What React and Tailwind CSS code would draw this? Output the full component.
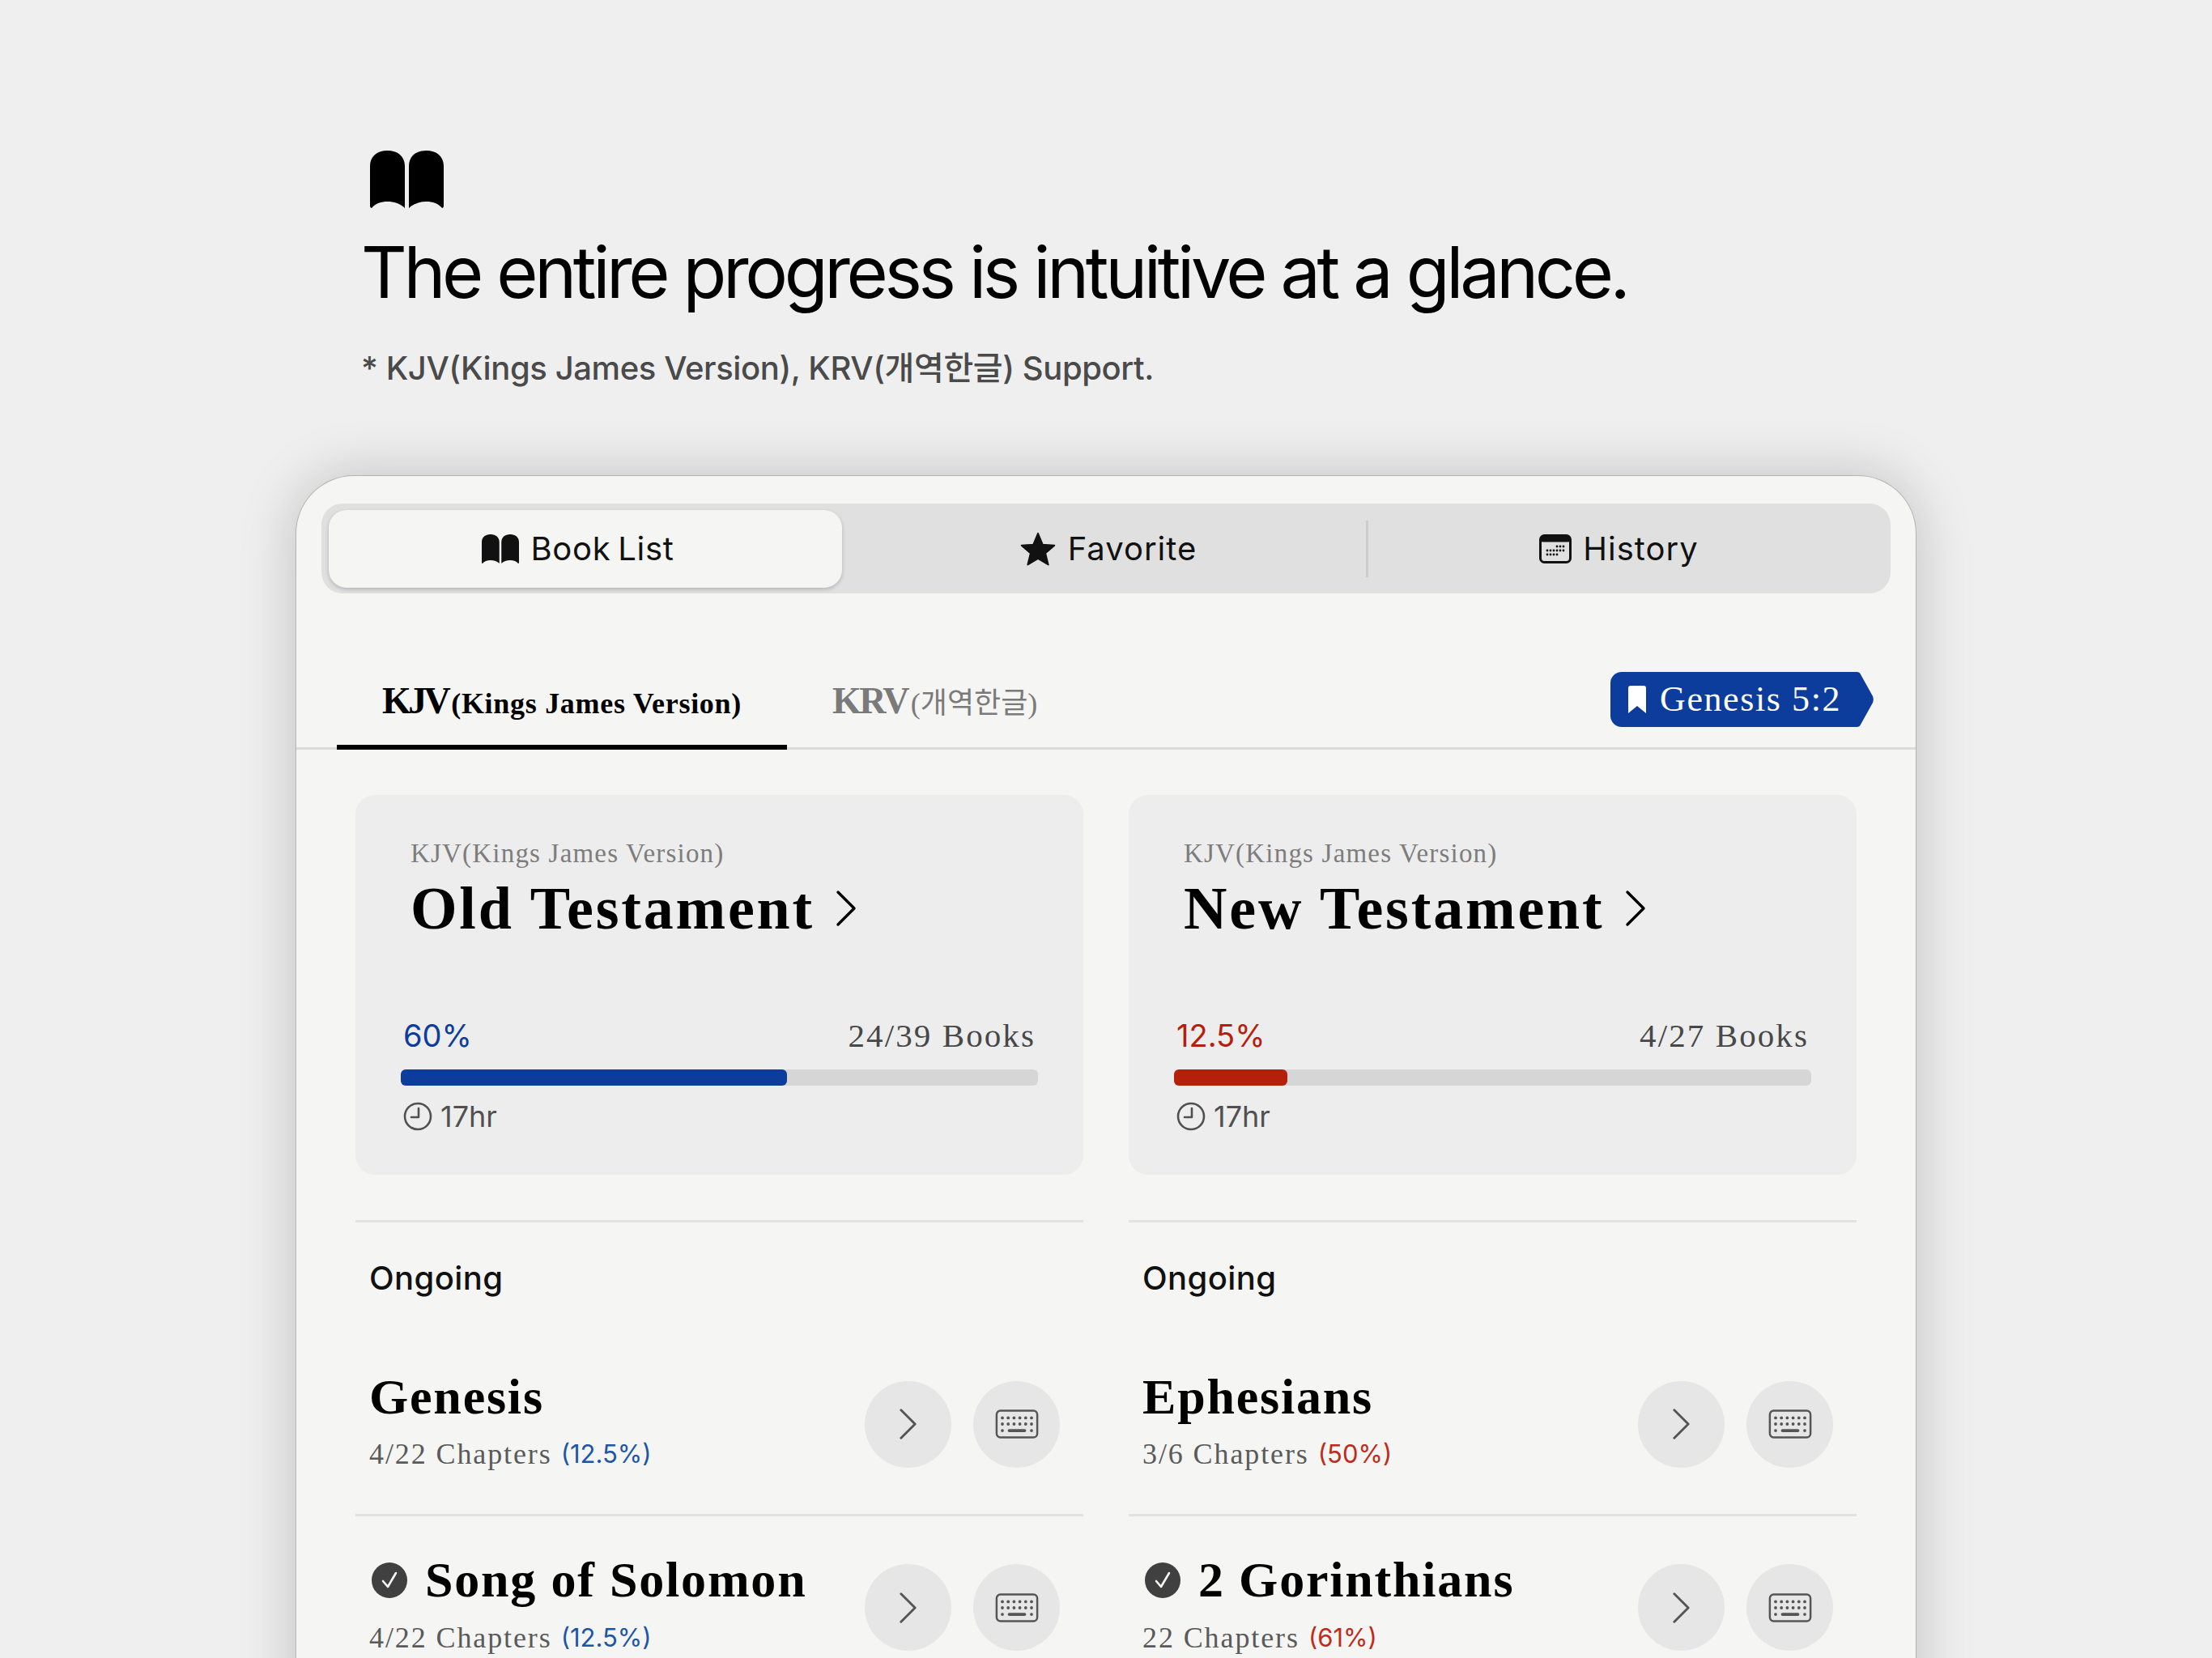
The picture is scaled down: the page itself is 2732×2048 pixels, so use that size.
import React from "react";

const sans = "[font-family:Inter,'Noto_Sans_CJK_KR',sans-serif]";
const serif = "[font-family:'Liberation_Serif','Noto_Sans_CJK_KR',serif]";

function BookIcon({ className }) {
  return (
    <svg viewBox="0 0 91 71" className={className} fill="currentColor">
      <path d="M0 68V19C0 7 9 0 21.5 0S43 7 43 19V71C38 66 30 63 21.5 63S6 66 2 71C1 71 0 70 0 68Z" />
      <path d="M91 68V19C91 7 82 0 69.5 0S48 7 48 19V71C53 66 61 63 69.5 63S85 66 89 71C90 71 91 70 91 68Z" />
    </svg>
  );
}

function Chevron({ className }) {
  return (
    <svg viewBox="0 0 26 44" className={className} fill="none" stroke="currentColor" strokeWidth="3.4" strokeLinecap="round" strokeLinejoin="round">
      <path d="M3 2L23 22L3 42" />
    </svg>
  );
}

function Keyboard() {
  const top = [0, 1, 2, 3, 4, 5];
  return (
    <svg viewBox="0 0 56 38" className="h-[36px] w-[54px] text-[#555555]" fill="currentColor">
      <rect x="1.5" y="1.5" width="53" height="35" rx="5" fill="none" stroke="currentColor" strokeWidth="2.6" />
      {top.map((i) => (
        <circle key={"a" + i} cx={9 + i * 7.6} cy="11" r="2" />
      ))}
      {top.map((i) => (
        <circle key={"b" + i} cx={9 + i * 7.6} cy="19" r="2" />
      ))}
      <circle cx="9" cy="27.5" r="2" />
      <circle cx="47" cy="27.5" r="2" />
      <rect x="16" y="25.5" width="24" height="4" rx="2" />
    </svg>
  );
}

function Calendar() {
  const cells = [
    [22, 15], [26, 15], [30, 15],
    [10, 20], [14, 20], [18, 20], [22, 20], [26, 20], [30, 20],
    [10, 25], [14, 25], [18, 25], [22, 25],
  ];
  return (
    <svg viewBox="0 0 40 36" className="h-[36px] w-[40px]" fill="currentColor">
      <rect x="1.5" y="1.5" width="37" height="33" rx="5" fill="none" stroke="currentColor" strokeWidth="3" />
      <rect x="1.5" y="1.5" width="37" height="8" rx="3" />
      {cells.map(([x, y]) => (
        <circle key={x + "-" + y} cx={x} cy={y} r="1.4" />
      ))}
    </svg>
  );
}

function Clock() {
  return (
    <svg viewBox="0 0 36 36" className="h-[36px] w-[36px] text-[#505050]" fill="none" stroke="currentColor" strokeWidth="2.6" strokeLinecap="round" strokeLinejoin="round">
      <circle cx="18" cy="18" r="16" />
      <path d="M19 8V19H10" />
    </svg>
  );
}

function Check() {
  return (
    <svg viewBox="0 0 44 44" className="ml-[3px] mr-[22px] h-[44px] w-[44px] shrink-0">
      <circle cx="22" cy="22" r="22" fill="#404040" />
      <path d="M14 23L20 30L30 13" fill="none" stroke="#f5f5f3" strokeWidth="2.6" strokeLinecap="round" strokeLinejoin="round" />
    </svg>
  );
}

function Segment({ icon, label, active, offset }) {
  return (
    <div className={`flex h-full flex-1 items-center justify-center gap-[14px] text-[40px] text-[#111111] ${sans} ${offset} ${active ? "rounded-[22px] bg-[#f5f5f3] shadow-[0_2px_5px_rgba(0,0,0,0.2)]" : ""}`}>
      {icon}
      <span className={active ? "tracking-[0.7px] [word-spacing:-3px]" : "tracking-[1px]"}>{label}</span>
    </div>
  );
}

function ProgressCard({ title, pct, books, color, fill }) {
  return (
    <div className="flex h-[469px] flex-col justify-between rounded-[24px] bg-[#ededed] px-[56px] pb-[52px] pt-[52px]">
      <div className="pl-[12px]">
        <div className={`text-[33px] leading-[40px] tracking-[1.2px] text-[#7d7d7d] ${serif}`}>KJV(Kings James Version)</div>
        <div className={`mt-[10px] flex items-center gap-[26px] text-[74px] font-bold leading-[76px] tracking-[2.8px] text-black ${serif}`}>
          <span>{title}</span>
          <Chevron className="h-[46px] w-[26px] text-black" />
        </div>
      </div>
      <div>
        <div className="flex items-center justify-between pl-[3px] pr-[3px]">
          <span className={`text-[38px] leading-[48px] ${sans}`} style={{ color }}>{pct}</span>
          <span className={`text-[41px] leading-[48px] tracking-[2.1px] text-[#484848] ${serif}`}>{books}</span>
        </div>
        <div className="mt-[18px] h-[20px] rounded-[6px] bg-[#d6d6d6]">
          <div className="h-full rounded-[6px]" style={{ width: fill, backgroundColor: color }} />
        </div>
        <div className={`mt-[18px] flex items-center gap-[10px] pl-[3px] text-[36px] leading-[40px] text-[#505050] ${sans}`}>
          <Clock />
          <span>17hr</span>
        </div>
      </div>
    </div>
  );
}

function Round({ children }) {
  return <div className="flex h-[107px] w-[107px] items-center justify-center rounded-full bg-[#e6e6e6]">{children}</div>;
}

function BookRow({ name, chapters, pct, color, done, last }) {
  return (
    <div className={`flex h-[225px] items-center justify-between pl-[17px] pr-[29px] ${last ? "" : "border-b-[3px] border-[#e2e2e2]"}`}>
      <div className="-mt-[6px]">
        <div className={`flex h-[62px] items-center text-[62px] font-bold tracking-[1.8px] text-black ${serif}`}>
          {done && <Check />}
          <span>{name}</span>
        </div>
        <div className="mt-[18px] flex items-center gap-[11px] text-[36px] leading-[44px]">
          <span className={`tracking-[1.9px] text-[#5a5a5a] ${serif}`}>{chapters}</span>
          <span className={`text-[31px] ${sans}`} style={{ color }}>{pct}</span>
        </div>
      </div>
      <div className="flex items-center gap-[27px]">
        <Round>
          <Chevron className="h-[38px] w-[23px] text-[#555555]" />
        </Round>
        <Round>
          <Keyboard />
        </Round>
      </div>
    </div>
  );
}

function Column({ title, pct, books, color, soft, fill, rows }) {
  return (
    <div className="min-w-0">
      <ProgressCard title={title} pct={pct} books={books} color={color} fill={fill} />
      <div className="mt-[56px] border-t-[3px] border-[#e2e2e2]">
        <div className={`flex h-[138px] items-center pl-[17px] text-[40px] font-medium tracking-[0.4px] text-[#111111] ${sans}`}>Ongoing</div>
        {rows.map((r, i) => (
          <BookRow key={r.name} {...r} color={soft} last={i === rows.length - 1} />
        ))}
      </div>
    </div>
  );
}

export default function App() {
  return (
    <div className="h-[2048px] w-[2732px] overflow-hidden bg-[#efefef] pt-[186px]">
      <div className="pl-[446px]">
        <BookIcon className="ml-[11px] h-[71px] w-[91px] text-black" />
        <h1 className={`mt-[29px] whitespace-nowrap text-[88px] font-normal leading-[100px] tracking-[-4.4px] text-black ${sans}`}>
          The entire progress is intuitive at a glance.
        </h1>
        <p className={`mt-[44px] text-[40px] font-medium leading-[50px] tracking-[-0.4px] text-[#4a4a4a] ${sans}`}>
          * KJV(Kings James Version), KRV(개역한글) Support.
        </p>
      </div>

      <div className="ml-[365px] mt-[107px] w-[2002px] rounded-t-[72px] border-x border-t border-[#b4b4b4] bg-[#f5f5f3] pb-[200px] shadow-[0_0_70px_rgba(0,0,0,0.2)]">
        <div className="mx-[31px] mt-[34px] flex h-[111px] items-center rounded-[26px] bg-[#e0e0e0] pl-[9px]">
          <div className="flex h-[96px] w-[634px] shrink-0">
            <Segment active offset="pr-[18px]" label="Book List" icon={<BookIcon className="h-[36px] w-[46px]" />} />
          </div>
          <div className="flex h-[96px] w-[647px] shrink-0">
            <Segment
              offset="pl-[10px]"
              label="Favorite"
              icon={
                <svg viewBox="0 0 24 24" className="h-[46px] w-[46px]" fill="currentColor" stroke="currentColor" strokeWidth="1" strokeLinejoin="round">
                  <path d="M12 2L15 9.2L22.6 9.8L16.8 14.8L18.6 22.2L12 18.2L5.4 22.2L7.2 14.8L1.4 9.8L9 9.2Z" />
                </svg>
              }
            />
          </div>
          <div className="h-[70px] w-[3px] shrink-0 bg-[#cccccc]" />
          <div className="flex h-[96px] flex-1">
            <Segment offset="pr-[26px]" label="History" icon={<Calendar />} />
          </div>
        </div>

        <div className="mt-[68px] flex h-[125px] items-center border-b-[3px] border-[#dcdcdc] pl-[50px] pr-[52px]">
          <div className="-mb-[3px] flex h-[125px] w-[556px] shrink-0 items-center justify-center border-b-[6px] border-black pt-[10px]">
            <span className={`flex items-baseline font-bold text-black ${serif}`}>
              <span className="text-[46px] tracking-[-3.6px]">KJV</span>
              <span className="pl-[4px] text-[36px] tracking-[0.7px]">(Kings James Version)</span>
            </span>
          </div>
          <span className={`ml-[56px] flex items-baseline pt-[6px] font-bold text-[#7a7a7a] ${serif}`}>
            <span className="text-[46px] tracking-[-2.6px]">KRV</span>
            <span className="pl-[4px] text-[36px] font-normal">(개역한글)</span>
          </span>
          <div className="ml-auto mt-[3px] flex h-[68px] items-center">
            <div className={`flex h-[68px] w-[302px] items-center gap-[17px] rounded-l-[14px] bg-[#0d3d9c] pl-[22px] text-[44px] tracking-[1.6px] text-white ${serif}`}>
              <svg viewBox="0 0 22 34" className="h-[34px] w-[22px] shrink-0" fill="currentColor">
                <path d="M0 3C0 1 1 0 3 0H19C21 0 22 1 22 3V34L11 25L0 34Z" />
              </svg>
              <span>Genesis 5:2</span>
            </div>
            <svg viewBox="0 0 23 68" className="h-[68px] w-[23px] shrink-0" fill="#0d3d9c">
              <path d="M0 0H2C5 0 6 1 7 3L22 30C23 33 23 35 22 38L7 65C6 67 5 68 2 68H0Z" />
            </svg>
          </div>
        </div>

        <div className="mt-[56px] grid grid-cols-2 gap-x-[56px] px-[73px]">
          <Column
            title="Old Testament"
            pct="60%"
            books="24/39 Books"
            color="#0d3d9c"
            soft="#1d55a8"
            fill="60.6%"
            rows={[
              { name: "Genesis", chapters: "4/22 Chapters", pct: "(12.5%)" },
              { name: "Song of Solomon", chapters: "4/22 Chapters", pct: "(12.5%)", done: true },
            ]}
          />
          <Column
            title="New Testament"
            pct="12.5%"
            books="4/27 Books"
            color="#b5200d"
            soft="#bd2c1a"
            fill="17.8%"
            rows={[
              { name: "Ephesians", chapters: "3/6 Chapters", pct: "(50%)" },
              { name: "2 Gorinthians", chapters: "22 Chapters", pct: "(61%)", done: true },
            ]}
          />
        </div>
      </div>
    </div>
  );
}
